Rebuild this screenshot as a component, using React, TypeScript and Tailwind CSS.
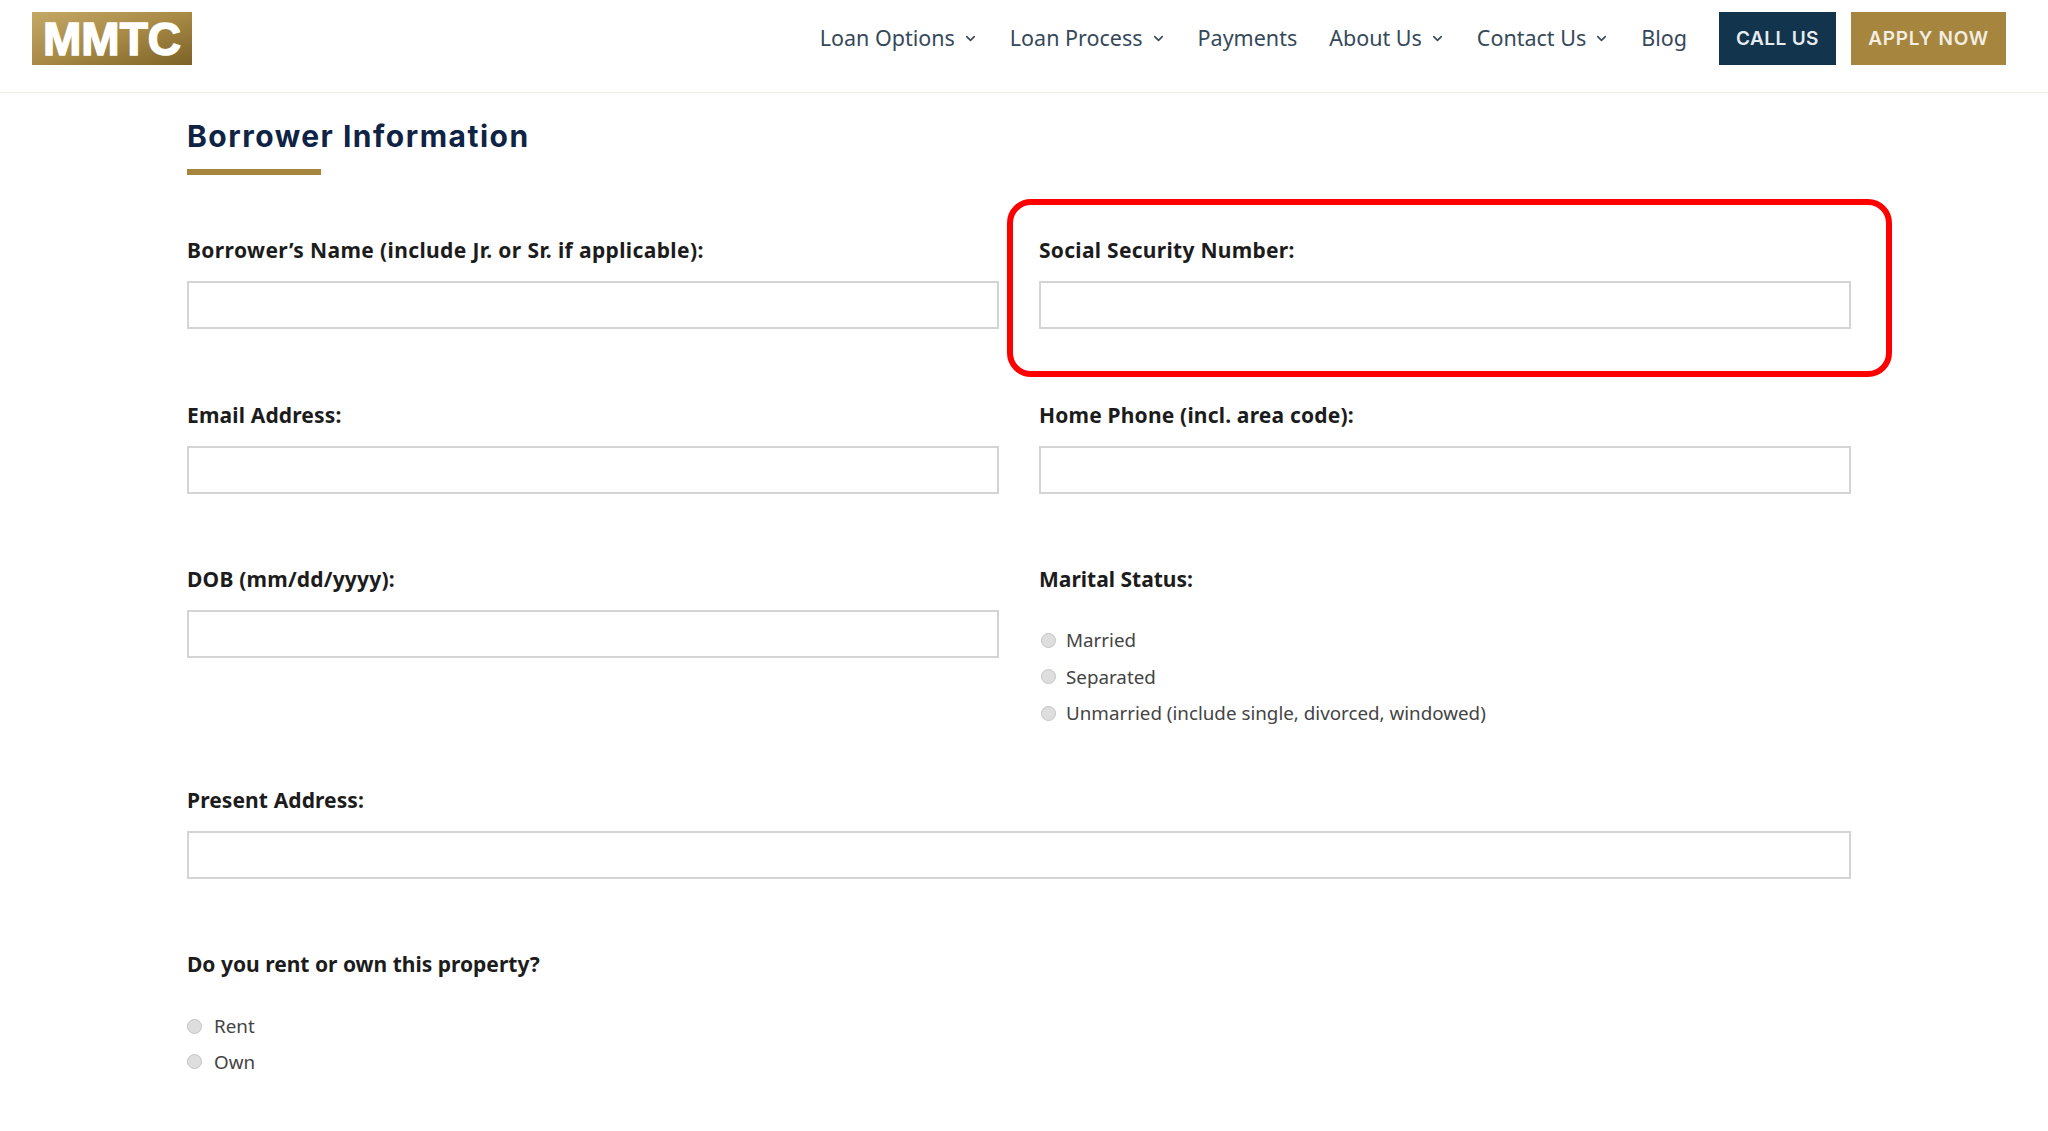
import { ChevronDown } from 'lucide-react';

const navItems = [
  { label: 'Loan Options', caret: true },
  { label: 'Loan Process', caret: true },
  { label: 'Payments', caret: false },
  { label: 'About Us', caret: true },
  { label: 'Contact Us', caret: true },
  { label: 'Blog', caret: false },
];

function Field({ label, className = '', labelClass = '' }: { label: string; className?: string; labelClass?: string }) {
  return (
    <div className={className}>
      <label className={`block text-[21px] leading-[30px] font-bold text-[#1c1c1c] ${labelClass}`}>{label}</label>
      <input type="text" className="mt-[16px] block w-full h-[48px] border-2 border-[#d4d4d4] bg-white" />
    </div>
  );
}

function Radio({ label, className = '' }: { label: string; className?: string }) {
  return (
    <div className="flex items-center h-[36.5px] text-[18.8px] text-[#444444]">
      <span className={`w-[15px] h-[15px] rounded-full bg-[#dedede] border border-[#c4c4c4] ${className}`} />
      {label}
    </div>
  );
}

export default function App() {
  return (
    <div className="min-h-[1131px] overflow-hidden bg-white font-['Noto_Sans',sans-serif]">
      {/* Header */}
      <header className="flex items-center justify-between h-[93px] pl-[32px] pr-[42px] pb-[15px] border-b border-[#f1f0e8]">
        <div className="flex items-center justify-center w-[160px] h-[53px] bg-gradient-to-br from-[#c4a866] via-[#a88a45] to-[#7c6228] text-white text-[46px] leading-none font-bold [-webkit-text-stroke:1.5px_white] font-['Liberation_Sans',sans-serif]">
          MMTC
        </div>
        <nav className="flex items-center">
          {navItems.map((item) => (
            <a key={item.label} className="flex items-center mr-[32px] text-[21.5px] text-[#35495a]">
              {item.label}
              {item.caret && <ChevronDown className="ml-[8px] w-[15px] h-[15px]" strokeWidth={2.5} />}
            </a>
          ))}
          <a className="flex items-center justify-center w-[117px] h-[53px] pt-[2px] bg-[#12344d] text-[#e6ebee] text-[19px] font-semibold tracking-[0.4px] font-['Inter',sans-serif]">
            CALL US
          </a>
          <a className="flex items-center justify-center ml-[15px] w-[155px] h-[53px] pt-[2px] bg-[#a6853f] text-[#f3eee2] text-[19px] font-semibold tracking-[0.7px] font-['Inter',sans-serif]">
            APPLY NOW
          </a>
        </nav>
      </header>

      {/* Form */}
      <main className="px-[187px]">
        <h2 className="mt-[23px] text-[30px] leading-[40px] font-bold tracking-[1.5px] text-[#0f2345] font-['Inter',sans-serif]">Borrower Information</h2>
        <div className="mt-[13px] w-[134px] h-[6px] bg-[#a6853f]" />

        <div className="mt-[60px] grid grid-cols-[812px_812px] gap-x-[40px]">
          <Field label="Borrower’s Name (include Jr. or Sr. if applicable):" labelClass="tracking-[0.38px]" />
          <div className="relative">
            <Field label="Social Security Number:" labelClass="tracking-[0.28px]" />
            <div className="absolute left-[-32px] top-[-36px] w-[885px] h-[178px] border-[6px] border-[#ff0000] rounded-[24px]" />
          </div>

          <Field label="Email Address:" className="mt-[71px]" labelClass="tracking-[0.15px]" />
          <Field label="Home Phone (incl. area code):" className="mt-[71px]" labelClass="tracking-[0.18px]" />

          <Field label="DOB (mm/dd/yyyy):" className="mt-[70px]" labelClass="tracking-[0.2px]" />
          <div className="mt-[70px]">
            <label className="block text-[21px] leading-[30px] font-bold text-[#1c1c1c]">Marital Status:</label>
            <div className="mt-[28px]">
              <Radio label="Married" className="ml-[2px] mr-[10px]" />
              <Radio label="Separated" className="ml-[2px] mr-[10px]" />
              <Radio label="Unmarried (include single, divorced, windowed)" className="ml-[2px] mr-[10px]" />
            </div>
          </div>

          <Field label="Present Address:" className="col-span-2 mt-[53px]" labelClass="tracking-[0.1px]" />

          <div className="col-span-2 mt-[70px]">
            <label className="block text-[21px] leading-[30px] font-bold text-[#1c1c1c]">Do you rent or own this property?</label>
            <div className="mt-[30px] [&>div]:h-[35.5px]">
              <Radio label="Rent" className="mr-[12px]" />
              <Radio label="Own" className="mr-[12px]" />
            </div>
          </div>
        </div>
      </main>
    </div>
  );
}
